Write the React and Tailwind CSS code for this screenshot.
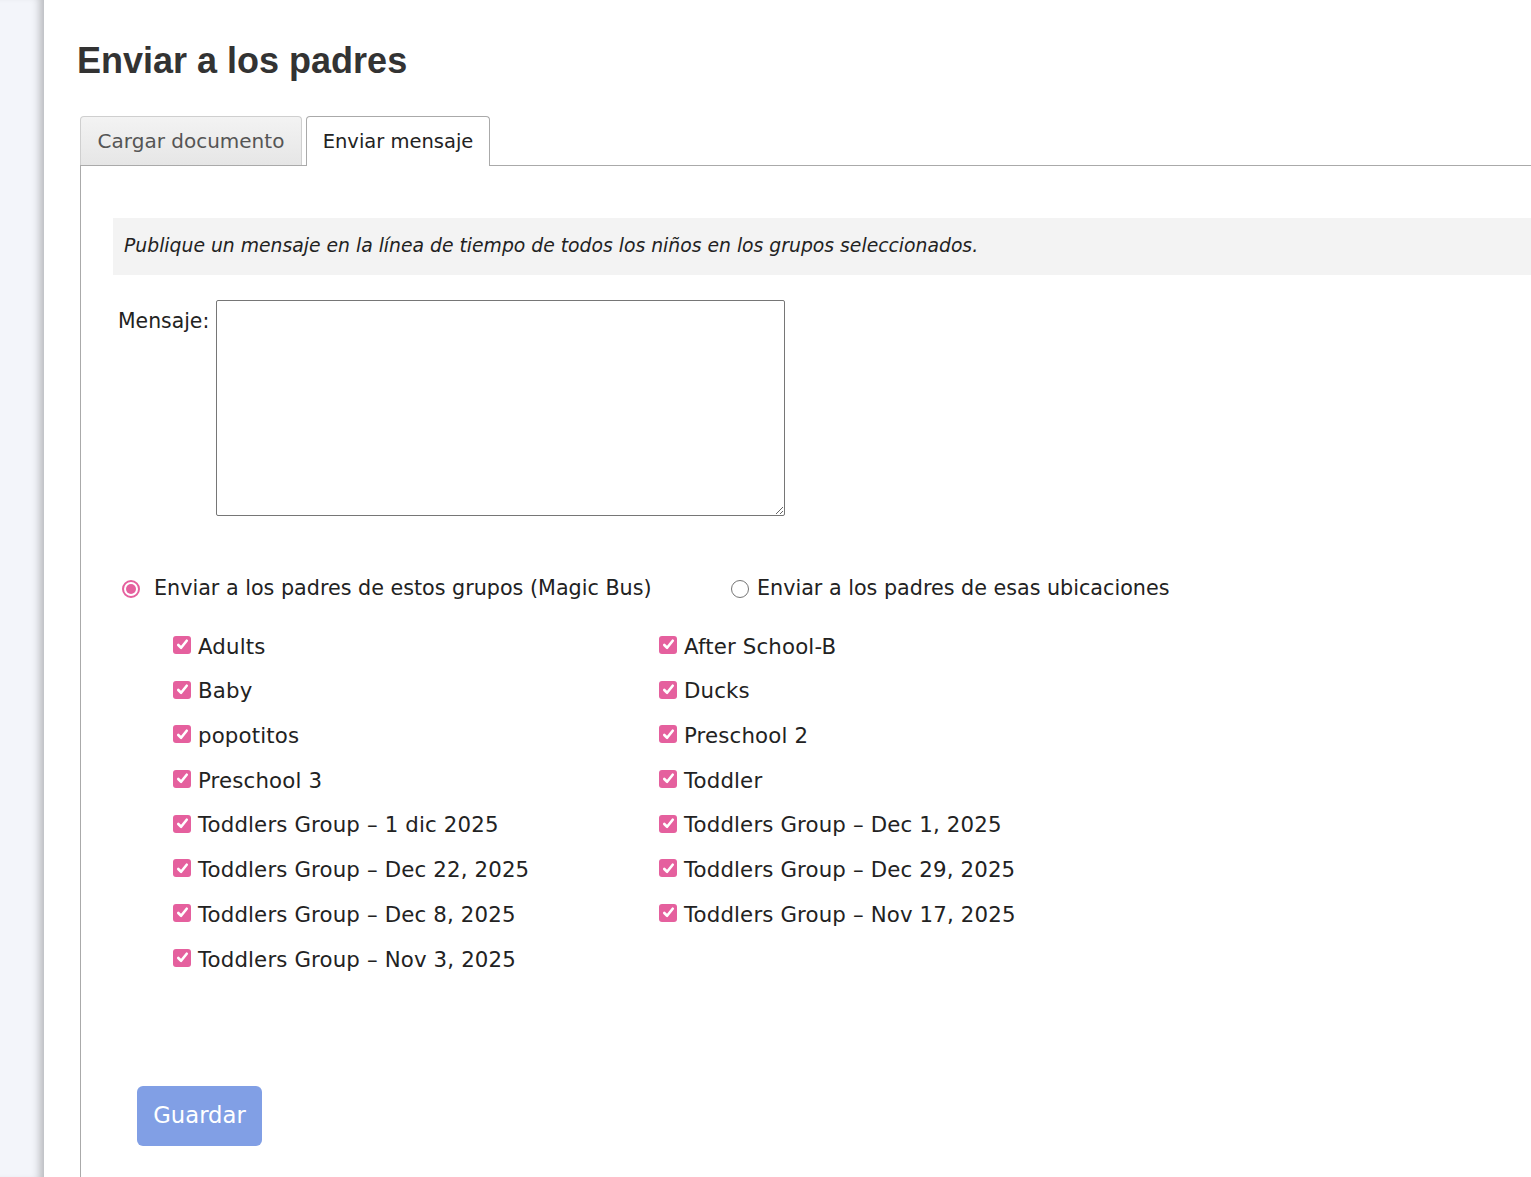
import React from "react";

const groupsLeft = [
  "Adults",
  "Baby",
  "popotitos",
  "Preschool 3",
  "Toddlers Group - 1 dic 2025",
  "Toddlers Group - Dec 22, 2025",
  "Toddlers Group - Dec 8, 2025",
  "Toddlers Group - Nov 3, 2025",
];

const groupsRight = [
  "After School-B",
  "Ducks",
  "Preschool 2",
  "Toddler",
  "Toddlers Group - Dec 1, 2025",
  "Toddlers Group - Dec 29, 2025",
  "Toddlers Group - Nov 17, 2025",
];

function CheckBox() {
  return (
    <span className="-mt-[3px] inline-flex h-[18px] w-[18px] shrink-0 items-center justify-center rounded-[3px] bg-[#e5609e]">
      <svg viewBox="0 0 16 16" className="h-[15px] w-[15px]" fill="none" stroke="white" strokeWidth={2.8} strokeLinecap="round" strokeLinejoin="round">
        <path d="M3.5 8.5l3 3 6-7.5" />
      </svg>
    </span>
  );
}

function GroupItem({ label }) {
  return (
    <div className="flex h-[44.7px] items-center gap-[7px]">
      <CheckBox />
      <span className="leading-none tracking-[0.15px]">{label.replace(/ - /g, " \u2013 ")}</span>
    </div>
  );
}

export default function App() {
  return (
    <div className="flex min-h-[1177px] bg-white text-[#222] [font-family:'DejaVu_Sans',sans-serif]">
      <div className="w-[44px] shrink-0 bg-[#f3f5fa] shadow-[inset_-10px_0_8px_-6px_rgba(0,0,0,0.25)]" />

      <div className="flex min-w-0 flex-1 flex-col pl-[36px]">
        <h1 className="-ml-[3px] mt-[40px] text-[36px] font-bold leading-[42px] text-[#333] [font-family:'Liberation_Sans',Arial,sans-serif]">
          Enviar a los padres
        </h1>

        <div className="mt-[34px] flex items-end gap-[4px]">
          <div className="flex h-[49px] w-[222px] items-center justify-center rounded-t-[4px] border border-b-0 border-[#cfcfcf] bg-gradient-to-b from-[#f3f3f3] to-[#e6e6e6] text-[20px] text-[#555]">
            Cargar documento
          </div>
          <div className="relative -mb-px flex h-[50px] w-[184px] items-center justify-center rounded-t-[4px] border border-b-0 border-[#aaa] bg-white text-[19.5px] text-[#222]">
            Enviar mensaje
          </div>
        </div>

        <div className="flex flex-1 flex-col border-l border-t border-[#aaa] pb-[30px]">
          <div className="ml-[32px] mt-[52px] flex h-[57px] items-center bg-[#f3f3f3] pl-[11px] text-[18.8px] italic text-[#222]">
            Publique un mensaje en la línea de tiempo de todos los niños en los grupos seleccionados.
          </div>

          <div className="ml-[37px] mt-[25px] flex items-start gap-[7px] text-[20.4px]">
            <label className="pt-[6px]">Mensaje:</label>
            <textarea className="h-[216px] w-[569px] resize rounded-[2px] border border-[#767676] bg-white outline-none" />
          </div>

          <div className="ml-[41px] mt-[57px] flex h-[32px] items-center text-[20.7px]">
            <div className="flex w-[609px] items-center gap-[14px]">
              <span className="flex h-[18px] w-[18px] items-center justify-center rounded-full border-[2px] border-[#e5609e] bg-white">
                <span className="h-[10px] w-[10px] rounded-full bg-[#e5609e]" />
              </span>
              <span>Enviar a los padres de estos grupos (Magic Bus)</span>
            </div>
            <div className="flex items-center gap-[8px]">
              <span className="h-[18px] w-[18px] rounded-full border border-[#767676] bg-white" />
              <span>Enviar a los padres de esas ubicaciones</span>
            </div>
          </div>

          <div className="ml-[92px] mt-[19px] flex text-[21.3px]">
            <div className="flex w-[486px] flex-col">
              {groupsLeft.map((g) => (
                <GroupItem key={g} label={g} />
              ))}
            </div>
            <div className="flex flex-col">
              {groupsRight.map((g) => (
                <GroupItem key={g} label={g} />
              ))}
            </div>
          </div>

          <div className="ml-[56px] mt-[104px]">
            <button className="h-[60px] w-[125px] rounded-[6px] bg-[#819fe5] text-[22.7px] text-white">
              Guardar
            </button>
          </div>
        </div>
      </div>
    </div>
  );
}
